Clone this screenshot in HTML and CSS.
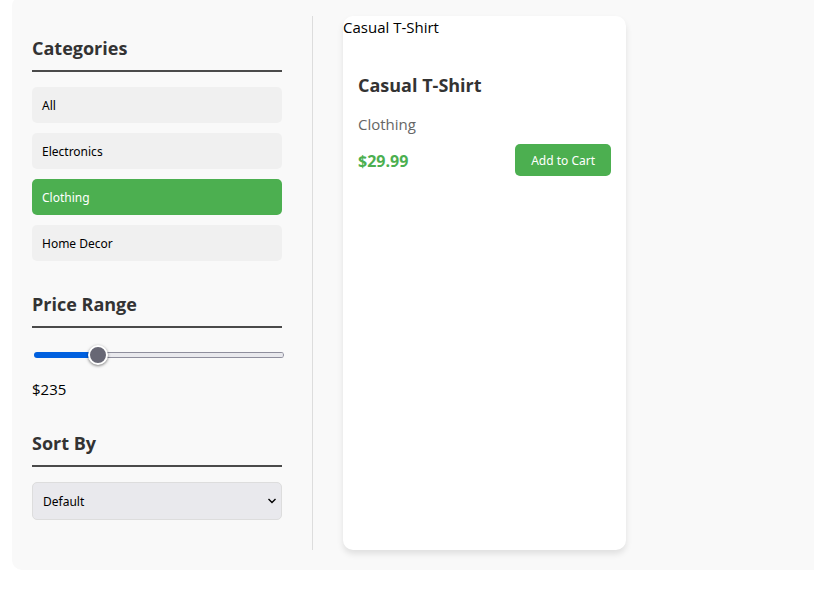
FILE: index.html
```html
<!DOCTYPE html>
<html lang="en">
<head>
<meta charset="utf-8">
<meta name="viewport" content="width=device-width, initial-scale=1">
<title>Product Catalog</title>
<link rel="stylesheet" href="styles.css">
</head>
<body>
<main class="catalog">
  <aside class="sidebar">
    <section class="filter">
      <h3 class="filter-title">Categories</h3>
      <div class="category-list">
        <button type="button" class="category">All</button>
        <button type="button" class="category">Electronics</button>
        <button type="button" class="category active" aria-pressed="true">Clothing</button>
        <button type="button" class="category">Home Decor</button>
      </div>
    </section>
    <section class="filter">
      <h3 class="filter-title"><label for="price">Price Range</label></h3>
      <input class="range" id="price" type="range" min="0" max="1000" value="235">
      <output class="range-value" for="price">$235</output>
    </section>
    <section class="filter">
      <h3 class="filter-title"><label for="sort">Sort By</label></h3>
      <div class="select-wrap">
        <select class="select" id="sort">
          <option>Default</option>
        </select>
        <svg class="chevron" viewBox="0 0 10 6" width="10" height="6" aria-hidden="true"><path d="M1.5 1 5 4.5 8.5 1" fill="none" stroke="#000" stroke-width="1.4"/></svg>
      </div>
    </section>
  </aside>
  <section class="products">
    <article class="card">
      <div class="card-image">Casual T-Shirt</div>
      <div class="card-info">
        <h3 class="card-title">Casual T-Shirt</h3>
        <p class="card-category">Clothing</p>
        <div class="card-footer">
          <span class="price">$29.99</span>
          <button type="button" class="add">Add to Cart</button>
        </div>
      </div>
    </article>
  </section>
</main>
</body>
</html>
```

FILE: styles.css
```css
* {
  box-sizing: border-box;
}

body {
  margin: 0;
  background: #fff;
  color: #000;
  font: 15px/21px "Open Sans", "Noto Sans", sans-serif;
}

.catalog {
  display: flex;
  gap: 30px;
  margin: -4px 0 0 12px;
  padding: 20px;
  background: #f9f9f9;
  border-radius: 10px 0 0 10px;
}

.sidebar {
  flex: none;
  width: 281px;
  padding: 19px 30px 0 0;
  border-right: 1px solid #ddd;
}

.filter {
  margin-bottom: 30px;
}

.filter-title {
  margin: 0 0 15px;
  padding-bottom: 8px;
  border-bottom: 2px solid #4a4a4a;
  color: #333;
  font-size: 18px;
  line-height: 27px;
}

.category-list {
  display: grid;
  gap: 10px;
}

.category {
  height: 36px;
  padding: 2px 10px 0;
  border: 0;
  border-radius: 5px;
  background: #f0f0f0;
  color: #000;
  font: 12px/16px "Noto Sans", "Open Sans", sans-serif;
  text-align: left;
}

.category.active {
  background: #4caf50;
  color: #fff;
}

.range {
  display: block;
  width: 100%;
  height: 24px;
  margin: 0 2px 12px;
  appearance: none;
  background: none;
}

.range::-webkit-slider-runnable-track {
  height: 6px;
  border-radius: 3px;
  background:
    linear-gradient(to right, #0060df 64px, transparent 64px),
    linear-gradient(#8f8f9d 1px, #e9e9ed 1px, #e9e9ed 5px, #8f8f9d 5px);
  box-shadow: inset -1px 0 #8f8f9d;
}

.range::-webkit-slider-thumb {
  appearance: none;
  width: 20px;
  height: 20px;
  margin-top: -7px;
  border: 2px solid #fff;
  border-radius: 50%;
  background: #676774;
  box-shadow: 0 1px 3px rgba(0, 0, 0, 0.5);
}

.range-value {
  display: block;
}

.select-wrap {
  position: relative;
}

.select {
  display: block;
  width: 100%;
  height: 38px;
  padding: 2px 10px 0;
  appearance: none;
  border: 1px solid #ddd;
  border-radius: 5px;
  background: #e9e9ed;
  color: #000;
  font: 12px/16px "Noto Sans", "Open Sans", sans-serif;
}

.chevron {
  position: absolute;
  top: 16px;
  right: 5px;
  pointer-events: none;
}

.products {
  flex: 1;
  display: grid;
  grid-template-columns: repeat(auto-fill, minmax(250px, 283px));
  gap: 20px;
}

.card {
  overflow: hidden;
  border-radius: 10px;
  background: #fff;
  box-shadow: 0 4px 6px rgba(0, 0, 0, 0.1);
}

.card-image {
  line-height: 23px;
}

.card-info {
  padding: 34px 15px 15px;
}

.card-title {
  margin: 0 0 16px;
  color: #333;
  font-size: 18px;
  line-height: 25px;
}

.card-category {
  margin: 0 0 9px;
  color: #666;
}

.card-footer {
  display: flex;
  align-items: center;
  justify-content: space-between;
}

.price {
  padding-top: 2px;
  color: #4caf50;
  font-size: 16px;
  font-weight: bold;
}

.add {
  height: 32px;
  padding: 2px 16px 0;
  border: 0;
  border-radius: 5px;
  background: #4caf50;
  color: #fff;
  font: 12px/16px "Noto Sans", "Open Sans", sans-serif;
}
```
